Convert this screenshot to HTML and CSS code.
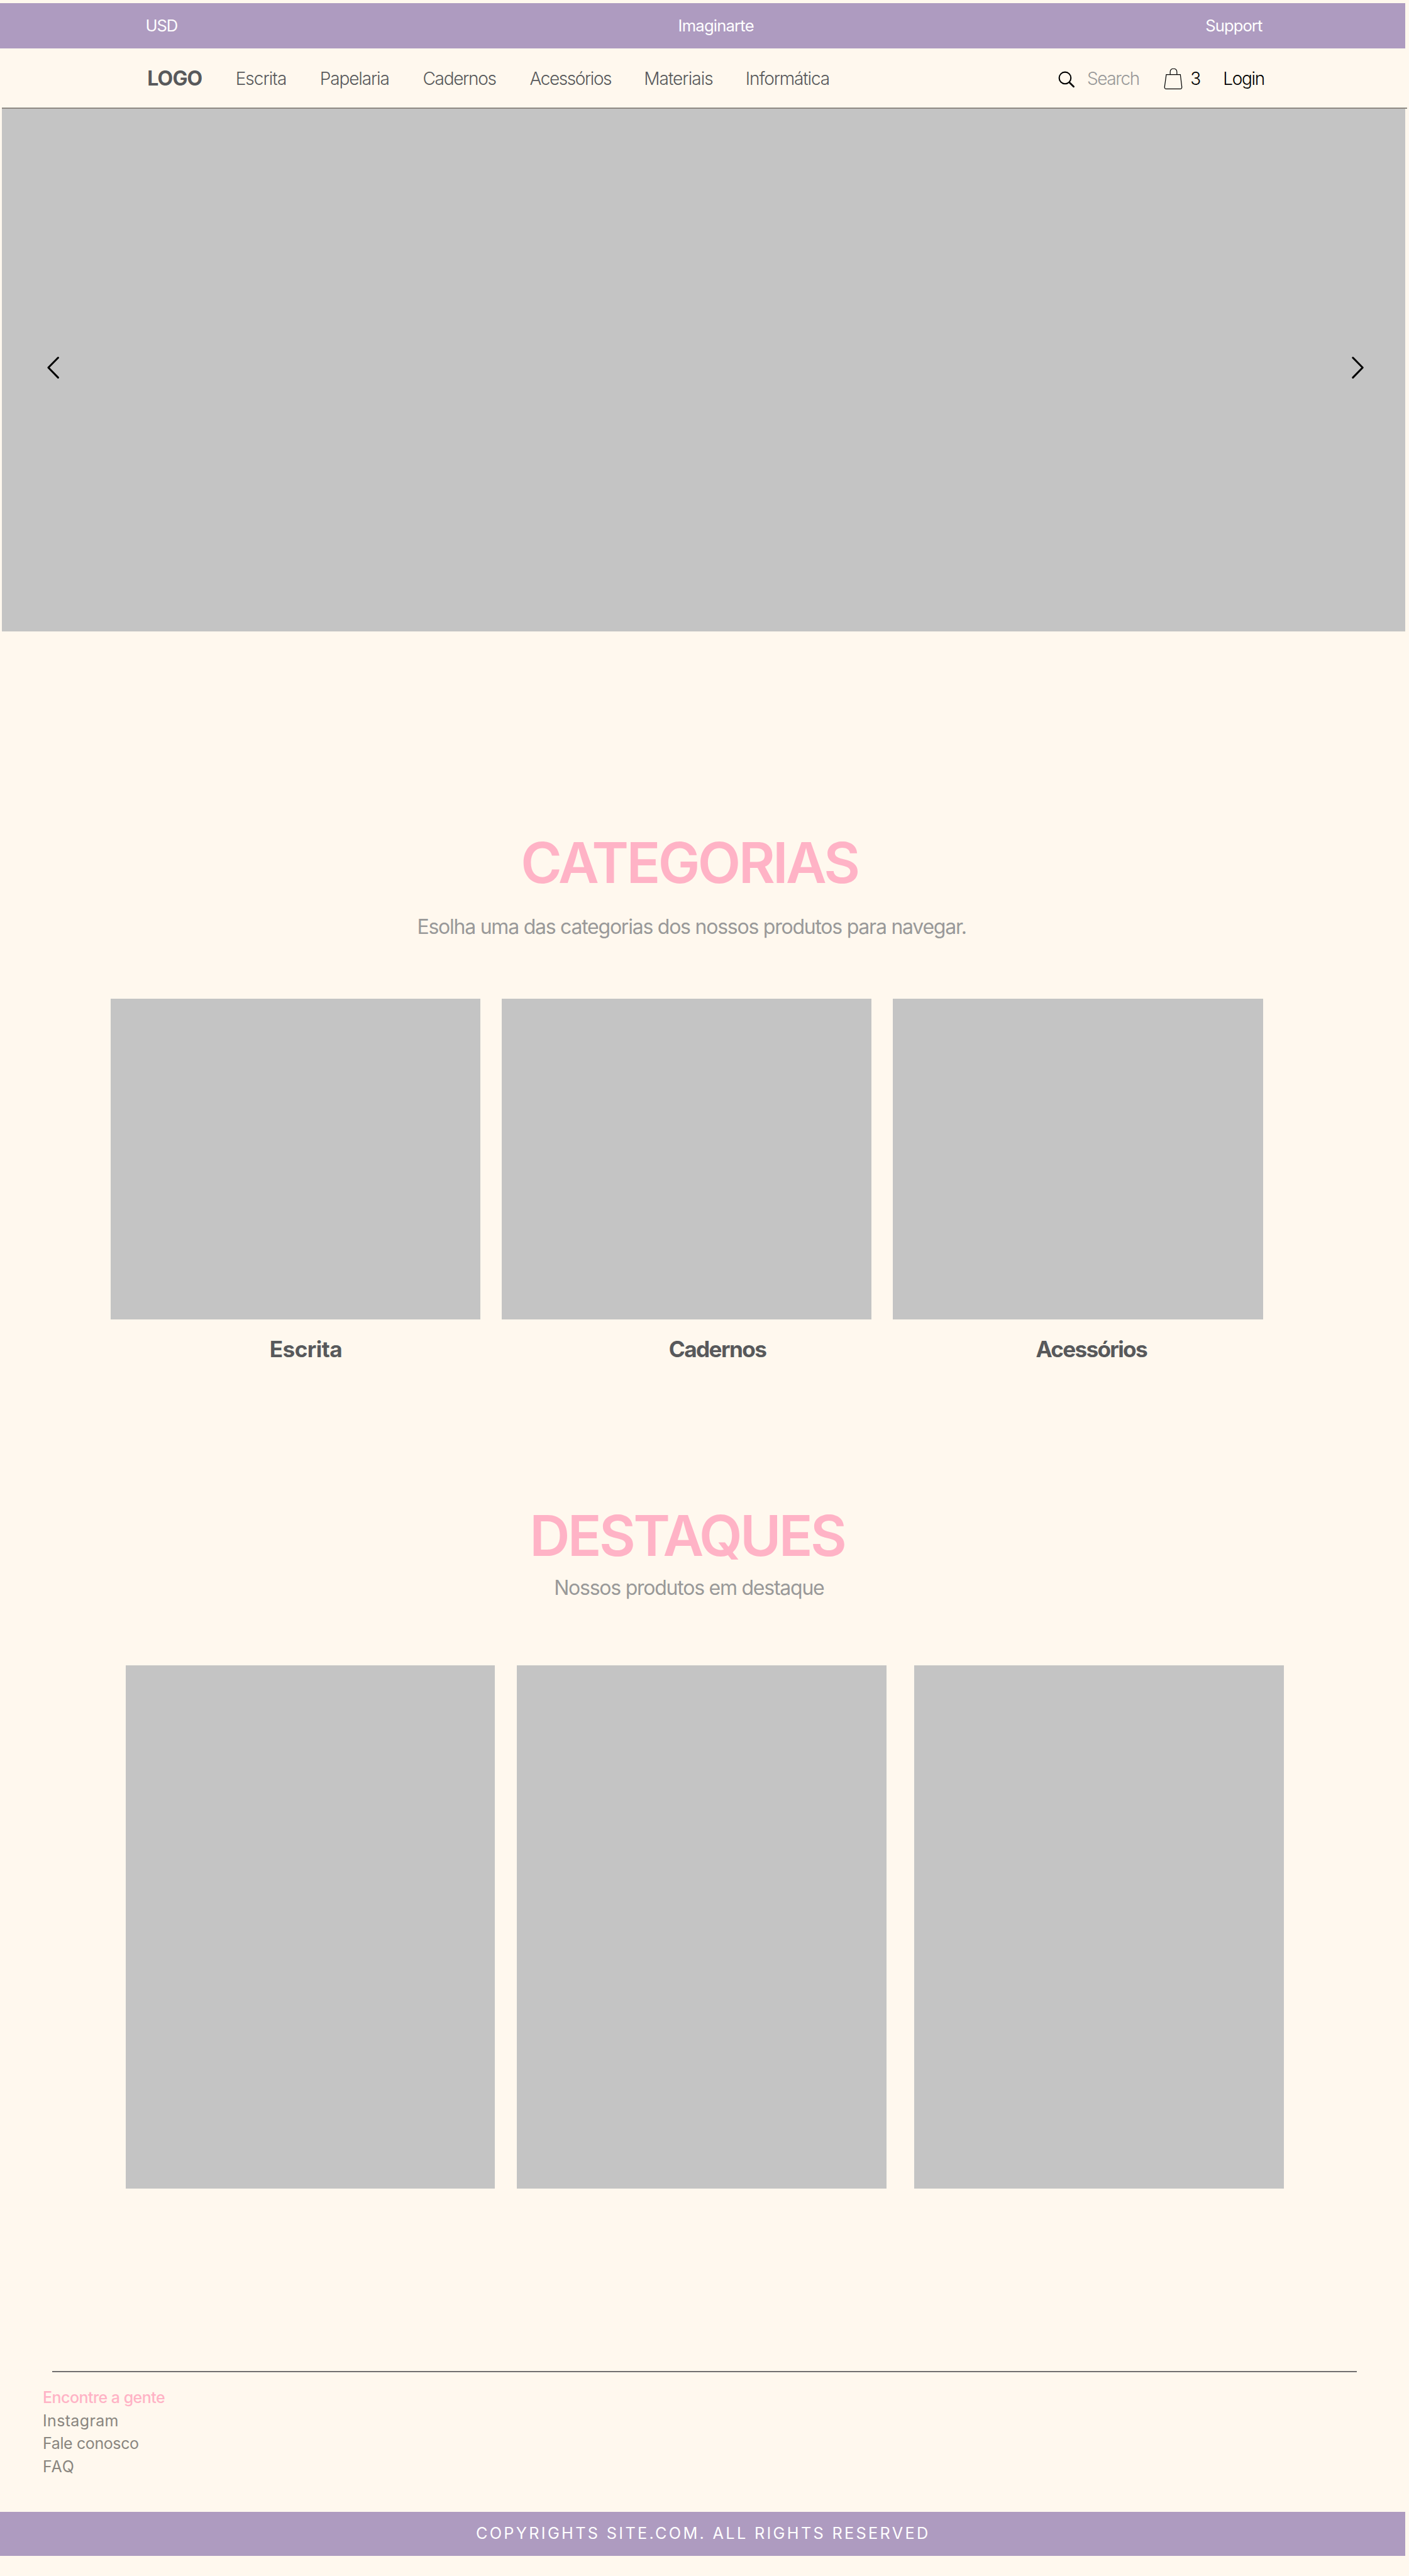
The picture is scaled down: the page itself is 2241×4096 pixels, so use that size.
FILE: index.html
```
<!DOCTYPE html>
<html lang="pt">
<head>
<meta charset="utf-8">
<title>Imaginarte</title>
<link rel="stylesheet" href="styles.css">
</head>
<body>
<div class="topbar">
  <span class="usd">USD</span>
  <span class="brand">Imaginarte</span>
  <span class="support">Support</span>
</div>
<header class="nav">
  <a class="logo">LOGO</a>
  <a class="link escrita">Escrita</a>
  <a class="link papelaria">Papelaria</a>
  <a class="link cadernos">Cadernos</a>
  <a class="link acessorios">Acessórios</a>
  <a class="link materiais">Materiais</a>
  <a class="link informatica">Informática</a>
  <svg class="icon-search" viewBox="0 0 36 36" fill="none" stroke="#000">
    <circle cx="15" cy="15" r="11.7" stroke-width="2.6"/>
    <path d="M23.6 23.8L32.2 32.3" stroke-width="3.4" stroke-linecap="round"/>
  </svg>
  <span class="search">Search</span>
  <svg class="icon-bag" viewBox="0 0 40 46" fill="none" stroke="#000" stroke-width="1.5">
    <path d="M6.2 14.6H34.3L37.3 39.3Q37.5 43 34 43H6.2Q2.6 43 2.8 39.3Z"/>
    <path d="M14 14.6V9.5Q14 2.8 20.7 2.8Q27.4 2.8 27.4 9.5V14.6"/>
  </svg>
  <span class="count">3</span>
  <a class="login">Login</a>
</header>
<section class="hero">
  <svg class="arrow" viewBox="0 0 24 44"><path d="M21.8 2.2L2.4 22L21.8 41.8"/></svg>
  <svg class="arrow" viewBox="0 0 24 44"><path d="M2.2 2.2L21.6 22L2.2 41.8"/></svg>
</section>
<section class="categories">
  <h2 class="title">CATEGORIAS</h2>
  <p class="subtitle">Esolha uma das categorias dos nossos produtos para navegar.</p>
  <div class="category-grid">
    <div class="category"><div class="thumb"></div><h3 class="name name-escrita">Escrita</h3></div>
    <div class="category"><div class="thumb"></div><h3 class="name name-cadernos">Cadernos</h3></div>
    <div class="category"><div class="thumb"></div><h3 class="name name-acessorios">Acessórios</h3></div>
  </div>
</section>
<section class="featured">
  <h2 class="title">DESTAQUES</h2>
  <p class="subtitle">Nossos produtos em destaque</p>
  <div class="product-grid">
    <div class="product"></div>
    <div class="product"></div>
    <div class="product product-last"></div>
  </div>
</section>
<footer class="footer">
  <nav class="footer-links">
    <span class="footer-title">Encontre a gente</span>
    <a class="instagram">Instagram</a>
    <a class="contact">Fale conosco</a>
    <a class="faq">FAQ</a>
  </nav>
  <div class="copyright">COPYRIGHTS SITE.COM. ALL RIGHTS RESERVED</div>
</footer>
</body>
</html>
```
FILE: styles.css
```
* { box-sizing: border-box; }

body {
  margin: 0;
  padding-top: 5px;
  height: 4096px;
  background: #fff8ee;
  font-family: Inter, "Liberation Sans", sans-serif;
  white-space: nowrap;
  overflow: hidden;
}

h2, h3, p { margin: 0; }

/* Top bar */
.topbar {
  display: grid;
  grid-template-columns: 847px 838.6px auto;
  width: 2235px;
  height: 72px;
  padding-left: 231.6px;
  background: #ae9bc0;
  color: #fff;
  font-size: 25.6px;
  line-height: 71px;
}
.usd { letter-spacing: -1.17px; }
.brand { letter-spacing: -0.79px; }
.support { letter-spacing: -0.92px; }

/* Navigation */
.nav {
  display: grid;
  grid-template-columns: 140.5px 134.1px 163.8px 169.8px 181.9px 161.6px 496.5px 46.6px 120.9px 43.5px 51.9px auto;
  align-items: start;
  width: 2235px;
  height: 96px;
  margin-left: 3px;
  padding-left: 231.2px;
  border-bottom: 2px solid #8e8983;
  color: #58595b;
  font-size: 28px;
  line-height: 96px;
}
.logo { font-size: 32px; font-weight: 700; letter-spacing: -0.82px; }
.link { font-weight: 300; }
.escrita { letter-spacing: -1px; }
.papelaria { letter-spacing: -1.14px; }
.cadernos { letter-spacing: -1.34px; }
.acessorios { letter-spacing: -1.43px; }
.materiais { letter-spacing: -0.97px; }
.informatica { letter-spacing: -1.15px; }
.icon-search { width: 28.7px; height: 28.7px; margin-top: 34.7px; }
.icon-bag { width: 31.9px; height: 36.7px; margin-top: 29.9px; }
.search, .count, .login { line-height: 97px; color: #000; font-weight: 300; }
.search { color: #999; letter-spacing: -1.39px; }
.login { letter-spacing: -1.3px; }

/* Carousel */
.hero {
  display: flex;
  justify-content: space-between;
  width: 2232px;
  height: 831px;
  margin-left: 3px;
  padding: 393.5px 65.6px 0 72.2px;
  background: #c4c4c4;
}
.arrow {
  width: 19.2px;
  height: 35.1px;
  fill: none;
  stroke: #000;
  stroke-width: 3.8;
  stroke-linecap: round;
  stroke-linejoin: round;
}

/* Sections */
.title {
  color: #ffb3c6;
  font-size: 89px;
  font-weight: 600;
  line-height: 100px;
}
.subtitle {
  color: #999;
  font-size: 32px;
  line-height: 40px;
  letter-spacing: -1.24px;
}

.categories { padding-top: 318px; }
.categories .title { padding-left: 828.2px; letter-spacing: -3.6px; }
.categories .subtitle { padding: 32px 0 94px 663.4px; }
.category-grid {
  display: grid;
  grid-template-columns: repeat(3, 588.4px);
  gap: 34px;
  padding-left: 175.6px;
}
.thumb { height: 510.4px; background: #c4c4c4; }
.name {
  padding-top: 24.6px;
  color: #58595b;
  font-size: 35.2px;
  font-weight: 700;
  line-height: 44px;
}
.name-escrita { padding-left: 253.2px; letter-spacing: -0.6px; }
.name-cadernos { padding-left: 265.8px; letter-spacing: -1.6px; }
.name-acessorios { padding-left: 227px; letter-spacing: -1.7px; }

.featured { padding-top: 225px; }
.featured .title { padding-left: 842.2px; letter-spacing: -3.7px; }
.featured .subtitle { padding: 13px 0 103px 881.2px; }
.product-grid { display: flex; gap: 35px; padding-left: 199.5px; }
.product { width: 587.5px; height: 832px; background: #c4c4c4; }
.product-last { margin-left: 9.5px; }

/* Footer */
.footer { padding-top: 290px; }
.footer-links {
  display: flex;
  flex-direction: column;
  height: 224px;
  width: 2075px;
  margin-left: 83px;
  padding-top: 22px;
  border-top: 2px solid #716f6f;
  color: #8a8680;
  font-size: 25px;
  line-height: 36.7px;
}
.footer-links > * { margin-left: -15px; }
.footer-title { color: #ffb3c6; font-weight: 500; letter-spacing: -0.54px; }
.instagram { letter-spacing: 0.34px; }
.contact { letter-spacing: -0.39px; }
.faq { letter-spacing: 0.9px; }
.copyright {
  width: 2235px;
  height: 70px;
  padding-left: 756.9px;
  background: #ae9bc0;
  color: #fff;
  font-size: 25.3px;
  line-height: 67px;
  letter-spacing: 3.3px;
}
```
